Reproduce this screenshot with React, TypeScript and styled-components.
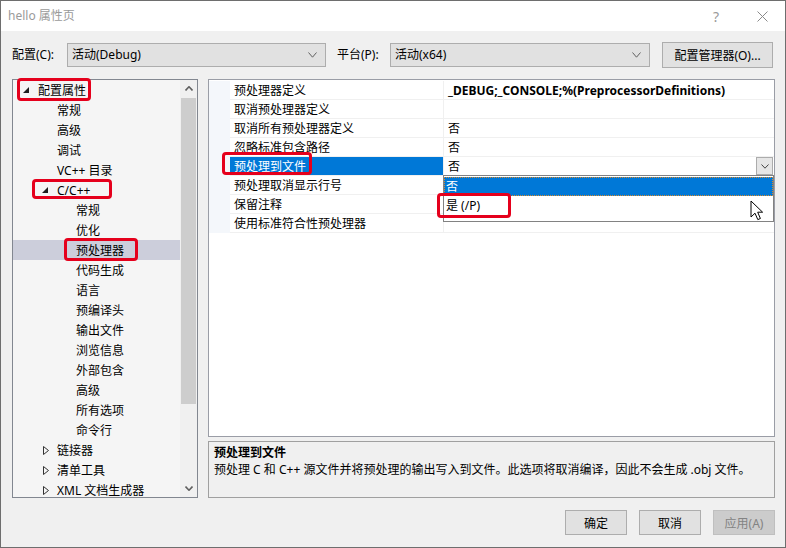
import styled, { createGlobalStyle } from "styled-components";

const FONT = `"Noto Sans", "Noto Sans CJK SC", sans-serif`;

const GlobalStyle = createGlobalStyle`
  html, body { margin: 0; padding: 0; background: #ffffff; }
  body { font-family: ${FONT}; font-size: 12px; color: #000; }
  *, *::before, *::after { box-sizing: border-box; }
`;

interface TreeItem {
  label: string;
  level: number;
  arrow?: "open" | "closed";
  selected?: boolean;
  box?: { l: number; t: number; w: number; h: number };
}

const treeItems: TreeItem[] = [
  { label: "配置属性", level: 0, arrow: "open", box: { l: 4, t: -2, w: 74, h: 23 } },
  { label: "常规", level: 1 },
  { label: "高级", level: 1 },
  { label: "调试", level: 1 },
  { label: "VC++ 目录", level: 1 },
  { label: "C/C++", level: 1, arrow: "open", box: { l: 19, t: -1, w: 80, h: 20 } },
  { label: "常规", level: 2 },
  { label: "优化", level: 2 },
  { label: "预处理器", level: 2, selected: true, box: { l: 51, t: -2, w: 74, h: 23 } },
  { label: "代码生成", level: 2 },
  { label: "语言", level: 2 },
  { label: "预编译头", level: 2 },
  { label: "输出文件", level: 2 },
  { label: "浏览信息", level: 2 },
  { label: "外部包含", level: 2 },
  { label: "高级", level: 2 },
  { label: "所有选项", level: 2 },
  { label: "命令行", level: 2 },
  { label: "链接器", level: 1, arrow: "closed" },
  { label: "清单工具", level: 1, arrow: "closed" },
  { label: "XML 文档生成器", level: 1, arrow: "closed" },
];

interface PropRow {
  name: string;
  value: string;
  bold?: boolean;
  selected?: boolean;
}

const propRows: PropRow[] = [
  { name: "预处理器定义", value: "_DEBUG;_CONSOLE;%(PreprocessorDefinitions)", bold: true },
  { name: "取消预处理器定义", value: "" },
  { name: "取消所有预处理器定义", value: "否" },
  { name: "忽略标准包含路径", value: "否" },
  { name: "预处理到文件", value: "否", selected: true },
  { name: "预处理取消显示行号", value: "" },
  { name: "保留注释", value: "" },
  { name: "使用标准符合性预处理器", value: "" },
];

// ---------- window chrome ----------

const Window = styled.div`
  width: 786px;
  height: 548px;
  display: flex;
  flex-direction: column;
  border: 1px solid #6e6e6e;
  background: #f0f0f0;
  overflow: hidden;
`;

const TitleBar = styled.div`
  height: 30px;
  flex: none;
  display: flex;
  align-items: center;
  background: #ffffff;
  padding-left: 7px;
`;

const Title = styled.span`
  color: #9a9a9a;
  line-height: 16px;
`;

const TitleButtons = styled.div`
  margin-left: auto;
  display: flex;
  height: 100%;
`;

const TitleBtn = styled.div`
  width: 46px;
  height: 100%;
  display: flex;
  align-items: center;
  justify-content: center;
  color: #9a9a9a;
  font-size: 14px;
`;

const Body = styled.div`
  flex: 1;
  display: flex;
  flex-direction: column;
  padding: 11px 10px 12px 11px;
`;

// ---------- toolbar ----------

const Toolbar = styled.div`
  height: 26px;
  flex: none;
  display: flex;
  align-items: center;
`;

const ToolLabel = styled.span<{ $w: number; $gap?: number }>`
  width: ${(p) => p.$w}px;
  margin-left: ${(p) => p.$gap ?? 0}px;
  line-height: 16px;
`;

const Combo = styled.div<{ $w: number }>`
  width: ${(p) => p.$w}px;
  height: 24px;
  display: flex;
  align-items: center;
  padding: 0 8px 0 4px;
  background: #e1e1e1;
  border: 1px solid #adadad;
  line-height: 16px;
`;

const ComboArrow = styled.span`
  margin-left: auto;
  display: flex;
`;

const ToolButton = styled.div`
  width: 111px;
  height: 26px;
  margin-left: 12px;
  display: flex;
  align-items: center;
  justify-content: center;
  background: #e1e1e1;
  border: 1px solid #adadad;
`;

// ---------- main area ----------

const Main = styled.div`
  height: 419px;
  margin-top: 11px;
  flex: none;
  display: flex;
  gap: 10px;
`;

const Tree = styled.div`
  width: 186px;
  display: flex;
  border: 1px solid #828790;
  background: #f5f5f5;
`;

const TreeList = styled.div`
  flex: 1;
  display: flex;
  flex-direction: column;
`;

const TreeRow = styled.div<{ $level: number; $selected?: boolean }>`
  position: relative;
  flex: none;
  height: 20px;
  display: flex;
  align-items: center;
  padding-left: ${(p) => 8 + p.$level * 19}px;
  background: ${(p) => (p.$selected ? "#cccedb" : "transparent")};
  white-space: nowrap;
`;

const TreeLabel = styled.span`
  line-height: 16px;
  padding-top: 2px;
`;

const ArrowSlot = styled.span`
  width: 17px;
  flex: none;
  display: flex;
  align-items: center;
  padding-left: 2px;
`;

const RedBox = styled.span<{ $l: number; $t: number; $w: number; $h: number }>`
  position: absolute;
  left: ${(p) => p.$l}px;
  top: ${(p) => p.$t}px;
  width: ${(p) => p.$w}px;
  height: ${(p) => p.$h}px;
  border: 3px solid #e5001c;
  border-radius: 4px;
  pointer-events: none;
  z-index: 20;
`;

const ScrollBar = styled.div`
  width: 17px;
  flex: none;
  display: flex;
  flex-direction: column;
  background: #f0f0f0;
`;

const ScrollBtn = styled.div`
  height: 17px;
  flex: none;
  display: flex;
  align-items: center;
  justify-content: center;
`;

const Thumb = styled.div`
  height: 306px;
  margin: 1px 1px 0 1px;
  background: #cdcdcd;
`;

const Spacer = styled.div`
  flex: 1;
`;

const RightColumn = styled.div`
  flex: 1;
  display: flex;
  flex-direction: column;
  gap: 4px;
`;

const Grid = styled.div`
  height: 358px;
  flex: none;
  padding-top: 1px;
  border: 1px solid #9a9da6;
  background: #ffffff;
`;

const GridRow = styled.div`
  position: relative;
  height: 19px;
  display: flex;
  line-height: 17px;
  white-space: nowrap;
`;

const Gutter = styled.div`
  width: 21px;
  flex: none;
  background: #f4f7fb;
`;

const NameCell = styled.div<{ $selected?: boolean }>`
  width: 213px;
  flex: none;
  padding: 1px 0 0 4px;
  border-bottom: 1px solid #f0f0f0;
  background: ${(p) => (p.$selected ? "#0078d7" : "transparent")};
  color: ${(p) => (p.$selected ? "#ffffff" : "#000000")};
`;

const ValueCell = styled.div<{ $bold?: boolean }>`
  position: relative;
  flex: 1;
  display: flex;
  padding: 1px 0 0 4px;
  border-left: 1px solid #f0f0f0;
  border-bottom: 1px solid #f0f0f0;
  font-weight: ${(p) => (p.$bold ? 700 : 400)};
`;

const DropButton = styled.div`
  width: 17px;
  height: 18px;
  margin: -1px 1px 0 auto;
  display: flex;
  align-items: center;
  justify-content: center;
  background: #e6e6e6;
  border: 1px solid #acacac;
`;

const DropList = styled.div`
  position: absolute;
  top: 18px;
  left: -1px;
  right: 0;
  height: 47px;
  padding-top: 1px;
  background: #ffffff;
  border: 1px solid #828282;
  z-index: 10;
`;

const DropItem = styled.div<{ $active?: boolean }>`
  position: relative;
  height: 19px;
  padding: 1px 0 0 1px;
  line-height: 16px;
  background: ${(p) => (p.$active ? "#0078d7" : "transparent")};
  color: ${(p) => (p.$active ? "#ffffff" : "#000000")};
  border: 1px dotted ${(p) => (p.$active ? "#d98a2b" : "transparent")};
`;

const Cursor = styled.svg`
  position: absolute;
  left: 306px;
  top: 24px;
`;

const Desc = styled.div`
  flex: 1;
  padding: 2px 5px 0;
  border: 1px solid #a0a0a0;
  line-height: 17px;
`;

const DescTitle = styled.div`
  font-weight: 700;
`;

// ---------- footer ----------

const Footer = styled.div`
  height: 25px;
  margin-top: 12px;
  flex: none;
  display: flex;
  justify-content: flex-end;
  gap: 12px;
`;

const DialogButton = styled.div<{ $disabled?: boolean }>`
  width: 62px;
  height: 25px;
  display: flex;
  align-items: center;
  justify-content: center;
  background: ${(p) => (p.$disabled ? "#cccccc" : "#e1e1e1")};
  border: 1px solid ${(p) => (p.$disabled ? "#bfbfbf" : "#adadad")};
  color: ${(p) => (p.$disabled ? "#838383" : "#000000")};
`;

// ---------- icons ----------

function Chevron({ up, color = "#606060", w = 9, sw = 1 }: { up?: boolean; color?: string; w?: number; sw?: number }) {
  const h = Math.round(w / 2) + 1;
  return (
    <svg width={w} height={h} viewBox={`0 0 ${w} ${h}`}>
      <path
        d={up ? `M0.5 ${h - 0.5} L${w / 2} 0.8 L${w - 0.5} ${h - 0.5}` : `M0.5 0.5 L${w / 2} ${h - 0.8} L${w - 0.5} 0.5`}
        fill="none"
        stroke={color}
        strokeWidth={sw}
      />
    </svg>
  );
}

function TreeArrow({ kind }: { kind: "open" | "closed" }) {
  if (kind === "open") {
    return (
      <svg width="6" height="6" viewBox="0 0 6 6">
        <path d="M6 0 L6 6 L0 6 Z" fill="#1e1e1e" />
      </svg>
    );
  }
  return (
    <svg width="7" height="9" viewBox="0 0 7 9" style={{ marginLeft: 1 }}>
      <path d="M0.5 0.5 L5.5 4.5 L0.5 8.5 Z" fill="none" stroke="#333" strokeWidth="1" />
    </svg>
  );
}

export default function App() {
  return (
    <>
      <GlobalStyle />
      <Window>
        <TitleBar>
          <Title>hello 属性页</Title>
          <TitleButtons>
            <TitleBtn>?</TitleBtn>
            <TitleBtn>
              <svg width="11" height="11" viewBox="0 0 11 11">
                <path d="M0.5 0.5 L10.5 10.5 M10.5 0.5 L0.5 10.5" stroke="#8a8a8a" strokeWidth="1" />
              </svg>
            </TitleBtn>
          </TitleButtons>
        </TitleBar>

        <Body>
          <Toolbar>
            <ToolLabel $w={55}>配置(C):</ToolLabel>
            <Combo $w={259}>
              <span>活动(Debug)</span>
              <ComboArrow>
                <Chevron />
              </ComboArrow>
            </Combo>
            <ToolLabel $w={53} $gap={11}>平台(P):</ToolLabel>
            <Combo $w={260}>
              <span>活动(x64)</span>
              <ComboArrow>
                <Chevron />
              </ComboArrow>
            </Combo>
            <ToolButton>配置管理器(O)...</ToolButton>
          </Toolbar>

          <Main>
            <Tree>
              <TreeList>
                {treeItems.map((item, i) => (
                  <TreeRow key={i} $level={item.level} $selected={item.selected}>
                    <ArrowSlot>{item.arrow && <TreeArrow kind={item.arrow} />}</ArrowSlot>
                    <TreeLabel>{item.label}</TreeLabel>
                    {item.box && <RedBox $l={item.box.l} $t={item.box.t} $w={item.box.w} $h={item.box.h} />}
                  </TreeRow>
                ))}
              </TreeList>
              <ScrollBar>
                <ScrollBtn>
                  <Chevron up w={8} sw={1.6} />
                </ScrollBtn>
                <Thumb />
                <Spacer />
                <ScrollBtn>
                  <Chevron w={8} sw={1.6} />
                </ScrollBtn>
              </ScrollBar>
            </Tree>

            <RightColumn>
              <Grid>
                {propRows.map((row, i) => (
                  <GridRow key={i}>
                    <Gutter />
                    <NameCell $selected={row.selected}>{row.name}</NameCell>
                    <ValueCell $bold={row.bold}>
                      <span>{row.value}</span>
                      {row.selected && (
                        <>
                          <DropButton>
                            <Chevron w={8} color="#444" />
                          </DropButton>
                          <DropList>
                            <DropItem $active>否</DropItem>
                            <DropItem>是 (/P)</DropItem>
                            <RedBox $l={-7} $t={17} $w={74} $h={25} />
                            <Cursor width="14" height="21" viewBox="0 0 14 21">
                              <path
                                d="M1 1 L1 17 L5 13.2 L7.8 19.6 L10.4 18.5 L7.7 12.2 L12.6 12.2 Z"
                                fill="#ffffff"
                                stroke="#000000"
                                strokeWidth="1"
                                strokeLinejoin="round"
                              />
                            </Cursor>
                          </DropList>
                        </>
                      )}
                    </ValueCell>
                    {row.selected && <RedBox $l={13} $t={-5} $w={90} $h={23} />}
                  </GridRow>
                ))}
              </Grid>
              <Desc>
                <DescTitle>预处理到文件</DescTitle>
                <div>预处理 C 和 C++ 源文件并将预处理的输出写入到文件。此选项将取消编译，因此不会生成 .obj 文件。</div>
              </Desc>
            </RightColumn>
          </Main>

          <Footer>
            <DialogButton>确定</DialogButton>
            <DialogButton>取消</DialogButton>
            <DialogButton $disabled>应用(A)</DialogButton>
          </Footer>
        </Body>
      </Window>
    </>
  );
}
